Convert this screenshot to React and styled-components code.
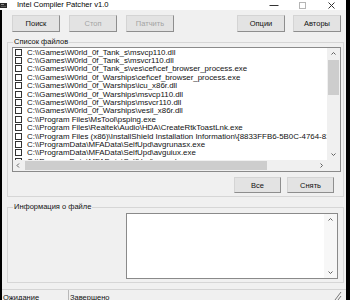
import React from 'react'
import styled, { createGlobalStyle } from 'styled-components'

const GlobalStyle = createGlobalStyle`
  html, body {
    margin: 0;
    padding: 0;
    background: #000;
  }
  body {
    font-family: "Liberation Sans", Arial, sans-serif;
    color: #000;
  }
`

const FONT = '"Liberation Sans", Arial, sans-serif'

const Window = styled.div`
  width: 346px;
  height: 300px;
  overflow: hidden;
  display: flex;
  flex-direction: column;
  border-right: 4px solid #000;
  background: #000;
`

const TitleBar = styled.div`
  height: 10px;
  flex: none;
  display: flex;
  align-items: center;
  background: #fff;
  font-size: 7.6px;
  line-height: 10px;
`

const TitleIcon = styled.svg`
  width: 7px;
  height: 7px;
  margin: 0 10px 0 0;
`

const Controls = styled.div`
  margin-left: auto;
  display: flex;
  height: 100%;
`

const CtrlBtn = styled.div`
  width: 29px;
  display: flex;
  align-items: center;
  justify-content: center;
`

const Body = styled.div`
  flex: 1;
  min-height: 0;
  display: flex;
  flex-direction: column;
  background: #f0f0f0;
  border-left: 2px solid #000;
`

const Toolbar = styled.div`
  display: flex;
  gap: 9px;
  padding: 5px 5px 0 10px;
`

const RightTools = styled.div`
  margin-left: auto;
  display: flex;
  gap: 8px;
`

const Button = styled.button`
  width: ${p => p.$w || 48}px;
  height: ${p => p.$h || 17}px;
  padding: 0;
  background: #e3e3e3;
  border: 1px solid;
  border-color: #d4d4d4 #8e8e8e #8e8e8e #d4d4d4;
  font: 7.5px ${FONT};
  color: ${p => (p.disabled ? '#a3a3a3' : '#111')};
`

const Group = styled.fieldset`
  margin: 5px 2px 0 5px;
  padding: 0 1px 3px 4px;
  border: 1px solid #d6d6d6;
  min-width: 0;
  display: flex;
  flex-direction: column;
`

const Legend = styled.legend`
  margin-left: 1px;
  padding: 0 1px;
  font-size: 7.5px;
  line-height: 10px;
  color: #111;
`

const ListBox = styled.div`
  height: 125px;
  box-sizing: border-box;
  border: 1px solid #8a8a8a;
  background: #fff;
  display: grid;
  grid-template-columns: 1fr 13px;
  grid-template-rows: 1fr 11px;
  margin-right: 1px;
`

const Rows = styled.div`
  overflow: hidden;
  min-width: 0;
`

const Row = styled.div`
  height: 8.4px;
  display: flex;
  align-items: center;
  gap: 5px;
  padding-left: 2px;
  font-size: 7.9px;
  white-space: nowrap;
  color: #111;
`

const Check = styled.span`
  flex: none;
  width: 7px;
  height: 7px;
  box-sizing: border-box;
  border: 1px solid #333;
  background: #fff;
`

const VScroll = styled.div`
  display: flex;
  flex-direction: column;
  background: ${p => p.$bg || '#f0f0f0'};
`

const HScroll = styled.div`
  display: flex;
  align-items: stretch;
  background: #f0f0f0;
`

const ArrowBox = styled.div`
  flex: none;
  width: ${p => p.$w || 13}px;
  height: ${p => p.$h || 11}px;
  display: flex;
  align-items: center;
  justify-content: center;
`

const Track = styled.div`
  flex: 1;
  display: flex;
  flex-direction: ${p => (p.$horizontal ? 'row' : 'column')};
  padding: ${p => (p.$horizontal ? '1px 0' : '0 1px')};
`

const Thumb = styled.div`
  background: #cdcdcd;
  ${p => (p.$horizontal ? `width: ${p.$size}px;` : `height: ${p.$size}px;`)}
  ${p => (p.$horizontal ? `margin-left: ${p.$offset}px;` : `margin-top: ${p.$offset}px;`)}
`

const Corner = styled.div`
  background: #f0f0f0;
`

const ButtonRow = styled.div`
  display: flex;
  justify-content: flex-end;
  gap: 6px;
  margin-top: 5px;
  padding-right: 8px;
`

const InfoContent = styled.div`
  display: flex;
  justify-content: flex-end;
  padding: 1px 4px 0 0;
`

const TextArea = styled.div`
  width: 212px;
  height: 66px;
  box-sizing: border-box;
  border: 1px solid #8a8a8a;
  background: #fff;
  display: flex;
  justify-content: flex-end;
`

const StatusBar = styled.div`
  margin-top: 6px;
  border-top: 1px solid #d4d4d4;
  display: flex;
  flex: 1;
  font-size: 7.5px;
  line-height: 10px;
  color: #111;
`

const Panel = styled.div`
  width: ${p => (p.$w ? `${p.$w}px` : 'auto')};
  flex: ${p => (p.$w ? 'none' : '1')};
  padding: 3px 0 0 1px;
  border-right: ${p => (p.$sep ? '1px solid #b8b8b8' : 'none')};
`

const Grip = styled.svg`
  width: 8px;
  height: 10px;
  margin: 1px 4px 0 0;
`

const Chevron = ({ dir }) => {
  const pts = {
    up: '0.5,3.5 2.5,1.5 4.5,3.5',
    down: '0.5,1.5 2.5,3.5 4.5,1.5',
    left: '3,0.5 1,2.5 3,4.5',
    right: '1.5,0.5 3.5,2.5 1.5,4.5',
  }[dir]
  return (
    <svg width='5' height='5' viewBox='0 0 5 5'>
      <polyline points={pts} fill='none' stroke='#606060' strokeWidth='1' />
    </svg>
  )
}

const files = [
  'C:\\\\Games\\W0rld_0f_Tank_s\\msvcp110.dll',
  'C:\\\\Games\\W0rld_0f_Tank_s\\msvcr110.dll',
  'C:\\\\Games\\W0rld_0f_Tank_s\\ves\\cef\\cef_browser_process.exe',
  'C:\\\\Games\\W0rld_0f_Warships\\cef\\cef_browser_process.exe',
  'C:\\\\Games\\W0rld_0f_Warships\\icu_x86r.dll',
  'C:\\\\Games\\W0rld_0f_Warships\\msvcp110.dll',
  'C:\\\\Games\\W0rld_0f_Warships\\msvcr110.dll',
  'C:\\\\Games\\W0rld_0f_Warships\\vesil_x86r.dll',
  'C:\\\\Program Files\\MsTool\\psping.exe',
  'C:\\\\Program Files\\Realtek\\Audio\\HDA\\CreateRtkToastLnk.exe',
  'C:\\\\Program Files (x86)\\InstallShield Installation Information\\{8833FFB6-5B0C-4764-81AA-06DFEE',
  'C:\\\\ProgramData\\MFAData\\SelfUpd\\avgrunasx.exe',
  'C:\\\\ProgramData\\MFAData\\SelfUpd\\avguiux.exe',
  'C:\\\\ProgramData\\MFAData\\SelfUpd\\avgwdsvc.exe',
]

const App = () => {
  return (
    <Window>
      <GlobalStyle />
      <TitleBar>
        <TitleIcon viewBox='0 0 7 7'>
          <rect x='0' y='1' width='7' height='5' fill='#2a2a2a' />
          <rect x='1' y='2' width='3' height='1' fill='#8a8a8a' />
          <rect x='1' y='4' width='5' height='1' fill='#5a5a5a' />
        </TitleIcon>
        Intel Compiler Patcher v1.0
        <Controls>
          <CtrlBtn>
            <svg width='10' height='3' viewBox='0 0 10 3'>
              <line x1='0.5' y1='1.5' x2='9.5' y2='1.5' stroke='#333' strokeWidth='1' />
            </svg>
          </CtrlBtn>
          <CtrlBtn>
            <svg width='7' height='7' viewBox='0 0 7 7'>
              <rect x='0.5' y='0.5' width='6' height='6' fill='none' stroke='#b5b5b5' strokeWidth='1' />
            </svg>
          </CtrlBtn>
          <CtrlBtn>
            <svg width='7' height='7' viewBox='0 0 7 7'>
              <path d='M0.5 0.5 L6.5 6.5 M6.5 0.5 L0.5 6.5' stroke='#333' strokeWidth='1' />
            </svg>
          </CtrlBtn>
        </Controls>
      </TitleBar>

      <Body>
        <Toolbar>
          <Button>Поиск</Button>
          <Button disabled>Стоп</Button>
          <Button disabled>Патчить</Button>
          <RightTools>
            <Button>Опции</Button>
            <Button>Авторы</Button>
          </RightTools>
        </Toolbar>

        <Group>
          <Legend>Список файлов</Legend>
          <ListBox>
            <Rows>
              {files.map(f => (
                <Row key={f}>
                  <Check />
                  {f}
                </Row>
              ))}
            </Rows>
            <VScroll>
              <ArrowBox><Chevron dir='up' /></ArrowBox>
              <Track>
                <Thumb $size={35} $offset={1} />
              </Track>
              <ArrowBox><Chevron dir='down' /></ArrowBox>
            </VScroll>
            <HScroll>
              <ArrowBox $w={11}><Chevron dir='left' /></ArrowBox>
              <Track $horizontal>
                <Thumb $horizontal $size={242} $offset={1} />
              </Track>
              <ArrowBox $w={11}><Chevron dir='right' /></ArrowBox>
            </HScroll>
            <Corner />
          </ListBox>
          <ButtonRow>
            <Button $w={47} $h={16}>Все</Button>
            <Button $w={47} $h={16}>Снять</Button>
          </ButtonRow>
        </Group>

        <Group>
          <Legend>Информация о файле</Legend>
          <InfoContent>
            <TextArea>
              <VScroll $bg='#f7f7f7'>
                <ArrowBox><Chevron dir='up' /></ArrowBox>
                <Track />
                <ArrowBox><Chevron dir='down' /></ArrowBox>
              </VScroll>
            </TextArea>
          </InfoContent>
        </Group>

        <StatusBar>
          <Panel $w={65} $sep>Ожидание</Panel>
          <Panel>Завершено</Panel>
          <Grip viewBox='0 0 8 10'>
            <path d='M7 1 L1 9 M7 5 L4 9' stroke='#777' strokeWidth='1' />
          </Grip>
        </StatusBar>
      </Body>
    </Window>
  )
}

export default App
